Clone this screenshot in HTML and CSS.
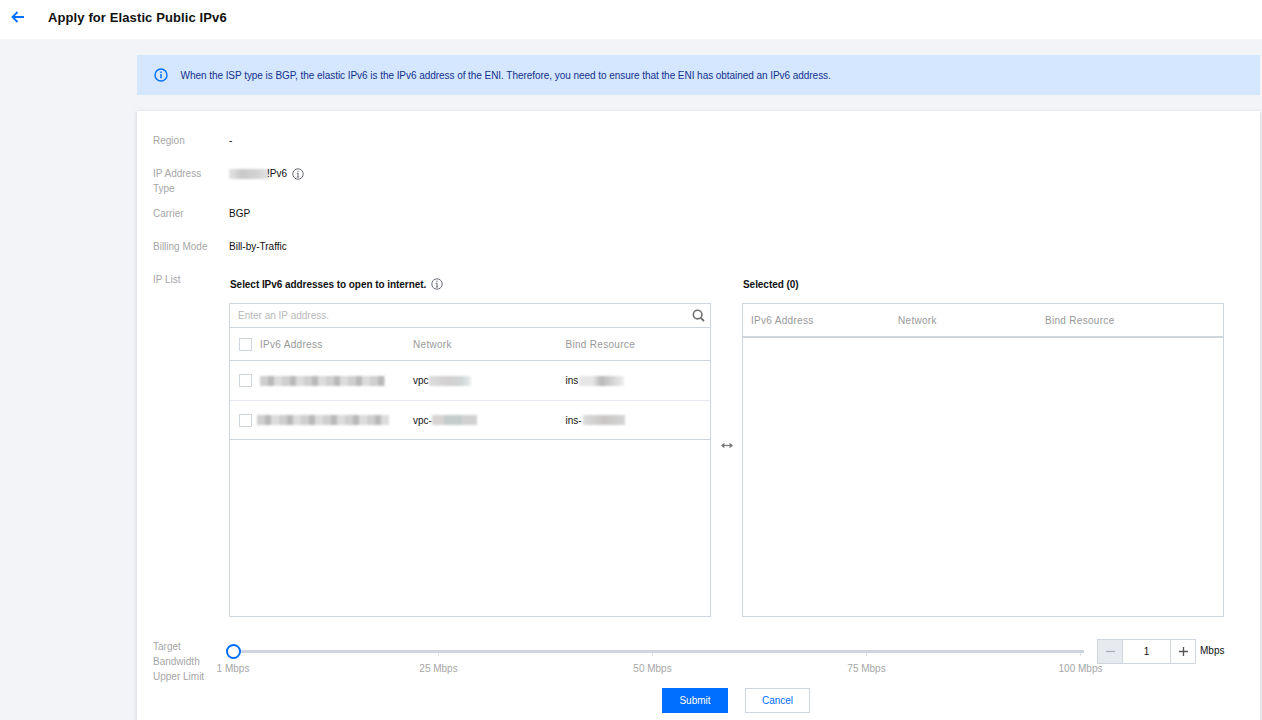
FILE: index.html
```html
<!DOCTYPE html>
<html lang="en">
<head>
<meta charset="utf-8">
<title>Apply for Elastic Public IPv6</title>
<link rel="stylesheet" href="styles.css">
</head>
<body>
<header class="topbar">
  <svg class="back" width="14" height="12" viewBox="0 0 14 12"><path d="M13 6H2M6.5 1 1.5 6l5 5" fill="none" stroke="#006eff" stroke-width="1.8"/></svg>
  <h1 class="title">Apply for Elastic Public IPv6</h1>
</header>
<main class="main">
  <div class="banner">
    <svg class="banner-icon" width="14" height="14" viewBox="0 0 14 14"><circle cx="7" cy="7" r="6" fill="none" stroke="#006eff" stroke-width="1.4"/><path d="M7 6v4.2M7 3.4v1.5" stroke="#006eff" stroke-width="1.5"/></svg>
    <span>When the ISP type is BGP, the elastic IPv6 is the IPv6 address of the ENI. Therefore, you need to ensure that the ENI has obtained an IPv6 address.</span>
  </div>
  <section class="card">
    <div class="row row-region"><div class="label">Region</div><div class="value">-</div></div>
    <div class="row row-type">
      <div class="label">IP Address Type</div>
      <div class="value value-type">
        <span class="smudge s-type"></span><span class="type-text">!Pv6</span>
        <svg class="info" width="12" height="12" viewBox="0 0 12 12"><circle cx="6" cy="6" r="5.2" fill="none" stroke="#6b6f76"/><path d="M6 5v4M6 2.6v1.3M4.8 5.2H6M4.8 9h2.4" stroke="#6b6f76" fill="none"/></svg>
      </div>
    </div>
    <div class="row row-carrier"><div class="label">Carrier</div><div class="value">BGP</div></div>
    <div class="row row-billing"><div class="label">Billing Mode</div><div class="value">Bill-by-Traffic</div></div>
    <div class="row row-list">
      <div class="label">IP List</div>
      <div class="transfer">
        <div class="side">
          <div class="side-title">Select IPv6 addresses to open to internet.
            <svg class="info info-title" width="12" height="12" viewBox="0 0 12 12"><circle cx="6" cy="6" r="5.2" fill="none" stroke="#6b6f76"/><path d="M6 5v4M6 2.6v1.3M4.8 5.2H6M4.8 9h2.4" stroke="#6b6f76" fill="none"/></svg>
          </div>
          <div class="panel">
            <div class="search">
              <span class="placeholder">Enter an IP address.</span>
              <svg width="13" height="13" viewBox="0 0 13 13"><circle cx="5.6" cy="5.6" r="4.3" fill="none" stroke="#707070" stroke-width="1.6"/><path d="m8.8 8.8 3.2 3.2" stroke="#707070" stroke-width="1.9"/></svg>
            </div>
            <div class="grid grid-head">
              <div class="cell-check"><span class="check"></span><span>IPv6 Address</span></div>
              <div>Network</div>
              <div>Bind Resource</div>
            </div>
            <div class="grid grid-row">
              <div class="cell-check"><span class="check"></span><span class="smudge s-ip"></span></div>
              <div class="cell-blur">vpc<span class="smudge s-vpc"></span></div>
              <div class="cell-blur">ins<span class="smudge s-ins"></span></div>
            </div>
            <div class="grid grid-row grid-row-last">
              <div class="cell-check"><span class="check"></span><span class="smudge s-ip s-ip2"></span></div>
              <div class="cell-blur">vpc-<span class="smudge s-vpc2"></span></div>
              <div class="cell-blur">ins-<span class="smudge s-ins2"></span></div>
            </div>
          </div>
        </div>
        <div class="swap">
          <svg width="12" height="7" viewBox="0 0 12 7"><path d="M1 3.5h10" fill="none" stroke="#777" stroke-width="1.2"/><path d="M3.4.8 0 3.5l3.4 2.7zM8.6.8 12 3.5 8.6 6.2z" fill="#777"/></svg>
        </div>
        <div class="side">
          <div class="side-title">Selected (0)</div>
          <div class="panel">
            <div class="grid-selected">
              <div>IPv6 Address</div>
              <div>Network</div>
              <div>Bind Resource</div>
            </div>
          </div>
        </div>
      </div>
    </div>
    <div class="row row-limit">
      <div class="label">Target Bandwidth Upper Limit</div>
      <div class="slider">
        <div class="track"><span class="thumb"></span></div>
        <div class="marks">
          <div class="mark mark-first"><span>1 Mbps</span></div>
          <div class="mark mark-second"><i></i><span>25 Mbps</span></div>
          <div class="mark mark-next"><i></i><span>50 Mbps</span></div>
          <div class="mark mark-next"><i></i><span>75 Mbps</span></div>
          <div class="mark mark-next"><i></i><span>100 Mbps</span></div>
        </div>
      </div>
      <div class="stepper">
        <span class="step step-off"><svg width="9" height="9" viewBox="0 0 9 9"><path d="M0 4.5h9" stroke="#a9adb5" stroke-width="1.3"/></svg></span>
        <span class="step-value">1</span>
        <span class="step"><svg width="9" height="9" viewBox="0 0 9 9"><path d="M0 4.5h9M4.5 0v9" stroke="#555" stroke-width="1.3"/></svg></span>
      </div>
      <span class="unit">Mbps</span>
    </div>
    <div class="actions">
      <button class="btn btn-primary">Submit</button>
      <button class="btn btn-ghost">Cancel</button>
    </div>
  </section>
</main>
</body>
</html>
```
FILE: styles.css
```css
* { box-sizing: border-box; }
html, body { margin: 0; height: 720px; overflow: hidden; }
body { background: #f2f4f8; font-family: "Liberation Sans", Arial, sans-serif; font-size: 10px; line-height: 15px; color: #111; }

.topbar { height: 39px; background: #fff; display: flex; align-items: center; padding: 0 0 5px 11px; }
.back { flex: none; }
.title { margin: 0 0 0 23px; font-size: 13px; letter-spacing: .11px; font-weight: 700; color: #111; }

.main { padding: 16px 2px 0 137px; }
.banner { height: 40px; background: #d5e7ff; display: flex; align-items: center; padding-left: 17px; color: #12318f; letter-spacing: -.05px; }
.banner-icon { margin-right: 12.5px; flex: none; }

.card { margin-top: 16px; height: 640px; background: #fff; padding: 22px 0 0 16px; box-shadow: 0 1px 4px rgba(54, 58, 80, .22); }
.row { display: flex; align-items: flex-start; }
.label { width: 76px; flex: none; color: #a6a6a6; padding-right: 14px; }
.value { color: #111; }
.row-type { margin-top: 18px; }
.value-type { display: flex; align-items: center; }
.type-text { position: relative; margin-left: -3px; }
.row-carrier { margin-top: 10px; }
.row-billing, .row-list { margin-top: 18px; }
.info { margin-left: 5px; vertical-align: -2px; }
.info-title { margin-left: 2px; }

.smudge { display: inline-block; height: 10px; filter: blur(1px); background: repeating-linear-gradient(90deg, #cfcfcf 0 8px, #b9b9b9 8px 14px, #dcdcdc 14px 22px); }
.s-type { width: 41px; background: linear-gradient(90deg, #e4e4e4, #c9c9c9 30%, #d2d2d2 70%, #e4e4e4); }
.s-ip { width: 125px; }
.s-ip2 { margin-left: -3px; width: 132px; }
.s-vpc { width: 42px; background: linear-gradient(90deg, #dcdcdc, #d2cfcf 50%, #d0d8d8 80%, #eee); }
.s-vpc2 { width: 45px; background: repeating-linear-gradient(90deg, #d8d4d4 0 12px, #c4cccc 12px 30px, #d2d2d2 30px 45px); }
.s-ins { width: 45px; margin-left: 1px; background: linear-gradient(90deg, #e6e6e6 30%, #b8b8b8 50%, #cfcfcf 70%, #eee); }
.s-ins2 { width: 42px; margin-left: 1px; background: linear-gradient(90deg, #dcdcdc, #c9c5c5 50%, #d6d6d6); }

.transfer { display: flex; flex: none; width: 995px; }
.side { width: 482px; flex: none; }
.side-title { font-weight: 700; letter-spacing: -.05px; height: 31px; padding: 5px 0 0 1px; }
.panel { height: 314px; border: 1px solid #cfd5de; background: #fff; }
.swap { width: 31px; flex: none; display: flex; align-items: center; justify-content: center; padding-top: 2px; }

.search { height: 24px; display: flex; align-items: center; justify-content: space-between; padding: 0 5px 0 8px; border-bottom: 1px solid #cfd5de; }
.placeholder { color: #b8b8b8; }
.grid { display: grid; grid-template-columns: 174px 152.5px 1fr; align-items: center; padding-left: 9px; }
.grid-head { height: 33px; border-bottom: 1px solid #cfd5de; color: #999; letter-spacing: .3px; }
.grid-row { height: 40px; border-bottom: 1px solid #e6e9ef; }
.grid-row-last { height: 39px; border-bottom-color: #cfd5de; }
.cell-check { display: flex; align-items: center; gap: 8px; }
.cell-blur { display: flex; align-items: center; }
.check { width: 13px; height: 13px; flex: none; border: 1px solid #cfd5de; background: #fff; }

.grid-selected { height: 34px; display: grid; grid-template-columns: 147px 147px 1fr; align-items: center; padding-left: 8px; border-bottom: 2px solid #cfd5de; color: #999; letter-spacing: .3px; }

.row-limit { margin-top: 22px; }
.slider { width: 867px; flex: none; padding: 11px 0 0 4px; position: relative; }
.track { height: 3px; width: 851px; background: #cfd5de; position: relative; }
.thumb { position: absolute; left: -7px; top: -6px; width: 15px; height: 15px; border-radius: 50%; background: #fff; border: 2px solid #006eff; }
.marks { display: flex; width: 847px; }
.mark { width: 0; flex: none; display: flex; flex-direction: column; align-items: center; white-space: nowrap; color: #a6a6a6; }
.mark-second { margin-left: 205.5px; }
.mark-next { margin-left: 214px; }
.mark i { width: 1px; height: 3px; background: #dfe3e9; flex: none; }
.mark span { margin-top: 5px; }
.mark-first span { margin-top: 8px; }

.stepper { display: flex; height: 25px; border: 1px solid #cfd5de; flex: none; width: 99px; margin-left: 1px; }
.step { width: 24px; flex: none; display: flex; align-items: center; justify-content: center; background: #fff; }
.step-off { background: #e7eaef; }
.step-value { flex: 1; text-align: center; line-height: 23px; border: 1px solid #cfd5de; border-width: 0 1px; }
.unit { margin: 4px 0 0 4px; }

.actions { display: flex; gap: 17px; padding-left: 509px; margin-top: 4px; }
.btn { height: 25px; font: inherit; padding: 0; cursor: pointer; }
.btn-primary { width: 66px; background: #006eff; color: #fff; border: 1px solid #006eff; }
.btn-ghost { width: 65px; background: #fff; color: #006eff; border: 1px solid #cfd5de; }
```
